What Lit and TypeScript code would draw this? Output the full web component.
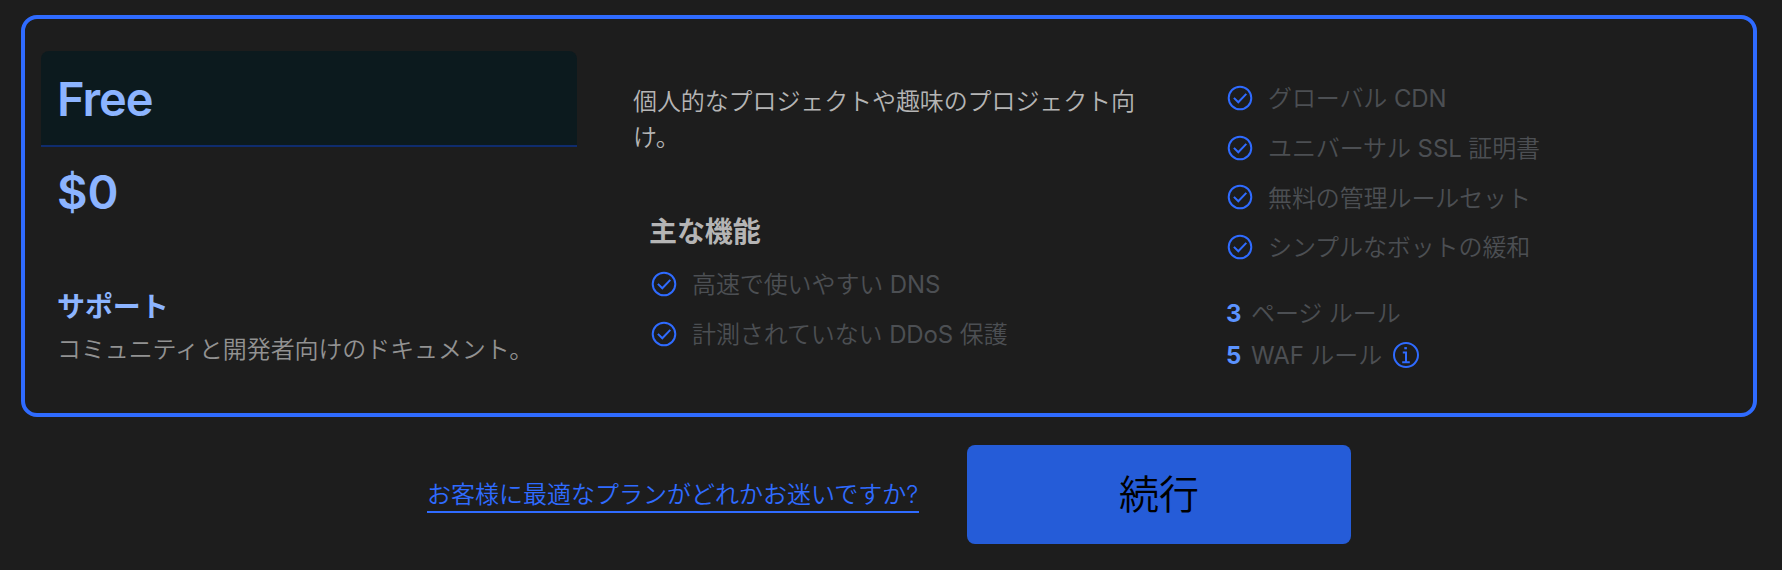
import { LitElement, html, css } from "lit";
import { customElement } from "lit/decorators.js";

const check = html`<svg class="check" width="26" height="26" viewBox="0 0 26 26" fill="none" stroke="#2f6bff" stroke-width="2">
  <circle cx="13" cy="13" r="11.3"></circle>
  <path d="M6.9 12.9 L11.3 17.3 L19.3 8.9"></path>
</svg>`;

const info = html`<svg class="info" width="26" height="26" viewBox="0 0 26 26" fill="none" stroke="#2f6bff" stroke-width="2">
  <circle cx="13" cy="13" r="12"></circle>
  <path d="M9.8 10.5 H13 V20 M9.2 20.2 H16.8"></path>
  <path d="M11.3 6.2 H13.9" stroke-width="2.2"></path>
</svg>`;

@customElement("app-root")
export class AppRoot extends LitElement {
  static styles = css`
    :host {
      display: block;
      box-sizing: border-box;
      height: 570px;
      padding: 15px 25px 0 21px;
      background: #1d1d1d;
      font-family: Inter, "Noto Sans CJK JP", sans-serif;
      font-size: 24px;
      line-height: 36px;
      letter-spacing: -0.1px;
      font-weight: 350;
      overflow: hidden;
    }
    .plan {
      box-sizing: border-box;
      height: 402px;
      border: 4px solid #2f6bff;
      border-radius: 16px;
      display: grid;
      grid-template-columns: 536px 520px 1fr;
      column-gap: 56px;
      padding: 32px 16px 0;
    }
    .title {
      box-sizing: border-box;
      height: 96px;
      border-bottom: 2px solid #0f2c6e;
      border-radius: 8px 8px 0 0;
      background: #0c1a1e;
      padding: 18px 16px;
      font-size: 47px;
      line-height: 60px;
      letter-spacing: -1.1px;
      font-weight: 600;
      color: #8cb4ff;
    }
    .price {
      padding: 15px 16px 0;
      font-size: 47px;
      line-height: 60px;
      letter-spacing: 0;
      font-weight: 600;
      color: #8cb4ff;
    }
    .support { padding: 64px 16px 0; }
    .support h3 {
      margin: 0;
      font-size: 28px;
      line-height: 42px;
      font-weight: 600;
      color: #8cb4ff;
    }
    .support p { margin: 4px 0 0; color: #929292; }
    .intro { margin: 33px 0 0; color: #b5b5b5; }
    .features { padding: 55px 16px 0; }
    .features h3 {
      margin: 0 0 7px;
      font-size: 28px;
      line-height: 42px;
      font-weight: 700;
      color: #b5b5b5;
    }
    .features ul { padding-left: 1px; }
    ul { list-style: none; margin: 0; padding: 0; color: #4c4f53; }
    li { display: flex; align-items: center; height: 49.7px; gap: 15px; }
    li > span { padding-top: 1px; }
    .latin { font-weight: 400; }
    .check { margin: 0 0 2px 1px; }
    .more { padding: 23px 0 0 17px; }
    .limits { padding-top: 20px; }
    .limit { display: flex; align-items: center; height: 42px; color: #4c4f53; }
    .limit b { width: 25px; font-weight: 700; color: #5b93ff; }
    .info { margin: 0 0 1px 11px; }
    .actions { display: flex; align-items: flex-start; padding: 28px 0 0 406px; }
    .help {
      box-sizing: border-box;
      width: 492px;
      margin-top: 31px;
      padding-top: 1px;
      height: 37px;
      border-bottom: 2px solid #2f6bff;
      color: #2f6bff;
      letter-spacing: 0;
      white-space: nowrap;
    }
    button {
      width: 384px;
      height: 99px;
      margin: 0 0 0 48px;
      padding: 0;
      border: 0;
      border-radius: 8px;
      background: #255cd8;
      color: #000;
      font: inherit;
      font-size: 40px;
    }
  `;

  private mixed(text: string) {
    return text
      .split(/([A-Za-z]+)/)
      .map((part) => (/^[A-Za-z]/.test(part) ? html`<span class="latin">${part}</span>` : part));
  }

  private item(text: string) {
    return html`<li>${check}<span>${this.mixed(text)}</span></li>`;
  }

  render() {
    return html`
      <section class="plan">
        <div>
          <div class="title">Free</div>
          <div class="price">$0</div>
          <div class="support">
            <h3>サポート</h3>
            <p>コミュニティと開発者向けのドキュメント。</p>
          </div>
        </div>
        <div>
          <p class="intro">個人的なプロジェクトや趣味のプロジェクト向け。</p>
          <div class="features">
            <h3>主な機能</h3>
            <ul>${["高速で使いやすい DNS", "計測されていない DDoS 保護"].map((t) => this.item(t))}</ul>
          </div>
        </div>
        <div class="more">
          <ul>${["グローバル CDN", "ユニバーサル SSL 証明書", "無料の管理ルールセット", "シンプルなボットの緩和"].map((t) => this.item(t))}</ul>
          <div class="limits">
            <div class="limit"><b>3</b><span>ページ ルール</span></div>
            <div class="limit"><b>5</b><span>${this.mixed("WAF ルール")}</span>${info}</div>
          </div>
        </div>
      </section>
      <div class="actions">
        <a class="help">お客様に最適なプランがどれかお迷いですか?</a>
        <button>続行</button>
      </div>
    `;
  }
}
